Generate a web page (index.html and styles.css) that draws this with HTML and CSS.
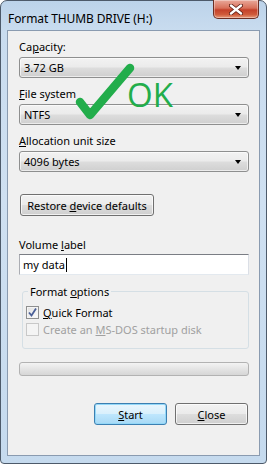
FILE: index.html
```html
<!DOCTYPE html>
<html>
<head>
<meta charset="utf-8">
<link rel="stylesheet" href="styles.css">
</head>
<body>
<div class="window">
  <div class="titlebar">
    <span class="title">Format THUMB DRIVE (H:)</span>
    <div class="close-btn">
      <svg width="14" height="11" viewBox="0 0 14 11"><path d="M2 1.5 L12 9.5 M12 1.5 L2 9.5" stroke="#5a1a10" stroke-width="4" stroke-linecap="round"/><path d="M2 1.5 L12 9.5 M12 1.5 L2 9.5" stroke="#ffffff" stroke-width="2.4" stroke-linecap="round"/></svg>
    </div>
  </div>
  <div class="client">
    <div class="label first">Ca<u>p</u>acity:</div>
    <div class="combo"><span>3.72 GB</span><i class="arrow"></i></div>
    <div class="label"><u>F</u>ile system</div>
    <div class="combo"><span>NTFS</span><i class="arrow"></i></div>
    <div class="label"><u>A</u>llocation unit size</div>
    <div class="combo"><span>4096 bytes</span><i class="arrow"></i></div>
    <div class="btn restore"><span>Restore <u>d</u>evice defaults</span></div>
    <div class="label vol">Volume <u>l</u>abel</div>
    <div class="textbox">my data<span class="caret"></span></div>
    <fieldset class="group">
      <legend>Format <u>o</u>ptions</legend>
      <div class="check-row">
        <span class="cb checked"><svg width="11" height="11" viewBox="0 0 11 11"><path d="M2 5.5 L4.5 8.5 L9 1.5" fill="none" stroke="#4a5f97" stroke-width="1.8"/></svg></span>
        <span><u>Q</u>uick Format</span>
      </div>
      <div class="check-row disabled">
        <span class="cb"></span>
        <span>Create an <u>M</u>S-DOS startup disk</span>
      </div>
    </fieldset>
    <div class="progress"></div>
    <div class="buttons">
      <div class="btn default"><span><u>S</u>tart</span></div>
      <div class="btn"><span><u>C</u>lose</span></div>
    </div>
  </div>
  <div class="ok-overlay">
    <svg width="62" height="64" viewBox="0 0 62 64"><path d="M6 41 L16 54 L56 7" fill="none" stroke="#22ad4b" stroke-width="8.5" stroke-linecap="round" stroke-linejoin="round"/></svg>
    <span class="ok-text">OK</span>
  </div>
</div>
</body>
</html>
```
FILE: styles.css
```css
* { box-sizing: border-box; }
html, body { margin: 0; padding: 0; background: #ffffff; }
body { width: 267px; height: 464px; overflow: hidden; }

.window {
  position: relative;
  width: 267px;
  height: 464px;
  display: flex;
  flex-direction: column;
  border: 1px solid #4d5a6a;
  border-radius: 7px 7px 4px 4px;
  background: linear-gradient(to bottom, #bcd3ea 0px, #c9dcef 30px, #cfe0f1 200px, #c5daee 464px);
  font-family: "Noto Sans", "DejaVu Sans", sans-serif;
  font-size: 11px;
  color: #000;
}

.titlebar {
  height: 29px;
  display: flex;
  align-items: flex-start;
  justify-content: space-between;
  flex-shrink: 0;
}
.title {
  margin: 9px 0 0 7px;
  font-size: 12px;
  letter-spacing: -0.1px;
  color: #000;
}
.close-btn {
  width: 46px;
  height: 19px;
  margin-right: 7px;
  margin-top: -1px;
  border: 1px solid #6b2e24;
  border-top: none;
  border-radius: 0 0 5px 5px;
  background: linear-gradient(to bottom, #e9a99b 0%, #d8705a 45%, #c4412a 55%, #cf5a3a 80%, #e79a7a 100%);
  box-shadow: inset 0 0 0 1px rgba(255,255,255,0.35);
  display: flex;
  align-items: center;
  justify-content: center;
}

.client {
  flex: 1;
  margin: 0 6px 7px 6px;
  background: #f0f0f0;
  border: 1px solid #8a9bb0;
  padding: 8px 10px 0 11px;
  display: flex;
  flex-direction: column;
}

.label {
  height: 15px;
  line-height: 15px;
  margin-top: 8px;
  white-space: nowrap;
}
.label.first { margin-top: 0; }
.label.vol { margin-top: 21px; }

.combo {
  margin-top: 3px;
  height: 21px;
  border: 1px solid #8e8f8f;
  border-radius: 3px;
  background: linear-gradient(to bottom, #f2f2f2 0%, #ebebeb 48%, #dddddd 52%, #cfcfcf 100%);
  box-shadow: inset 0 0 0 1px rgba(255,255,255,0.6);
  display: flex;
  align-items: center;
  justify-content: space-between;
  padding: 0 7px 0 4px;
}
.arrow {
  width: 0; height: 0;
  border-left: 3.5px solid transparent;
  border-right: 3.5px solid transparent;
  border-top: 4px solid #000;
}

.btn {
  height: 22px;
  border: 1px solid #707070;
  border-radius: 3px;
  background: linear-gradient(to bottom, #f2f2f2 0%, #ebebeb 48%, #dddddd 52%, #cfcfcf 100%);
  box-shadow: inset 0 0 0 1px rgba(255,255,255,0.7);
  display: flex;
  align-items: center;
  justify-content: center;
  white-space: nowrap;
}
.restore {
  margin-top: 22px;
  margin-left: 1px;
  width: 134px;
}

.textbox {
  margin-top: 2px;
  height: 21px;
  background: #fff;
  border: 1px solid #abadb3;
  border-top-color: #7a7d84;
  border-right-color: #dbdfe6;
  border-bottom-color: #e3e9ef;
  display: flex;
  align-items: center;
  padding-left: 3px;
  width: 230px;
}
.caret {
  display: inline-block;
  width: 1px;
  height: 14px;
  background: #000;
  margin-left: 1px;
}

.group {
  margin: 10px 0 0 3px;
  width: 227px;
  border: 1px solid #d5dfe5;
  border-radius: 3px;
  padding: 6px 0 4px 3px;
  height: 64px;
}
.group legend {
  padding: 0 2px;
  margin-left: 2px;
  line-height: 13px;
}
.check-row {
  display: flex;
  align-items: center;
  height: 17px;
  gap: 4px;
}
.cb {
  width: 13px;
  height: 13px;
  border: 1px solid #8e8f8f;
  background: linear-gradient(135deg, #e0e0e0 0%, #fcfcfc 100%);
  display: flex;
  align-items: center;
  justify-content: center;
  box-shadow: inset 0 0 0 1px #f4f4f4;
}
.disabled { color: #a0a0a0; }
.disabled .cb { border-color: #c8c8c8; background: #f4f4f4; }

.progress {
  margin-top: 13px;
  width: 230px;
  height: 14px;
  border: 1px solid #b2b2b2;
  border-radius: 3px;
  background: linear-gradient(to bottom, #f3f3f3 0%, #e4e4e4 50%, #d6d6d6 100%);
}

.buttons {
  margin-top: 27px;
  display: flex;
  justify-content: flex-end;
  gap: 8px;
  padding-right: 1px;
}
.buttons .btn { width: 73px; }
.btn.default {
  border-color: #3c7fb1;
  background: linear-gradient(to bottom, #eaf6fd 0%, #d9f0fc 48%, #bee6fd 52%, #a7d9f5 100%);
  box-shadow: inset 0 0 0 1px #94d8f8;
}

.ok-overlay {
  position: absolute;
  left: 73px;
  top: 60px;
  display: flex;
  align-items: flex-end;
}
.ok-overlay svg { display: block; }
.ok-text {
  font-family: "Open Sans", "Noto Sans", sans-serif;
  font-size: 33px;
  line-height: 33px;
  color: #22ad4b;
  margin-left: -9px;
  margin-bottom: 14px;
}
```
